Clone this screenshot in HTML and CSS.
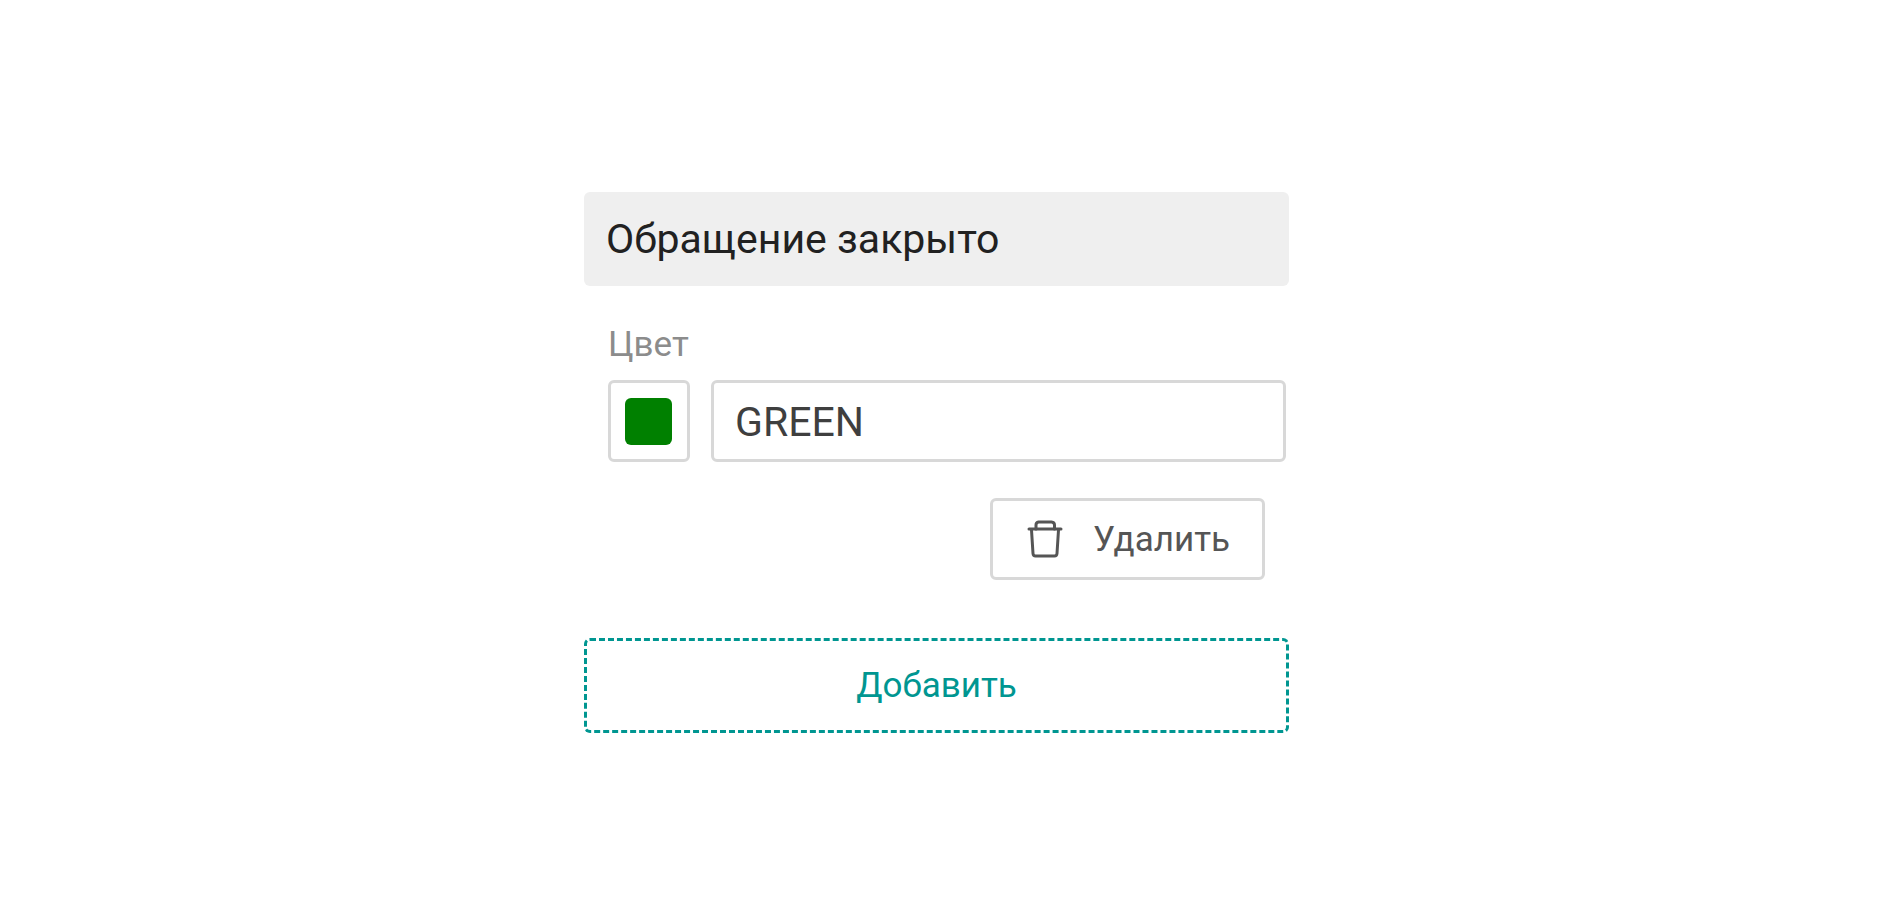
FILE: index.html
```html
<!DOCTYPE html>
<html lang="ru">
<head>
<meta charset="utf-8">
<meta name="viewport" content="width=device-width, initial-scale=1">
<title>Обращение закрыто</title>
<link rel="stylesheet" href="styles.css">
</head>
<body>
<main class="panel">
  <h1 class="panel-title">Обращение закрыто</h1>
  <div class="field">
    <label class="field-label" for="color-name">Цвет</label>
    <div class="field-row">
      <input class="swatch" type="color" value="#008000" aria-label="Выбор цвета">
      <input class="text-input" id="color-name" type="text" value="GREEN">
    </div>
  </div>
  <div class="actions">
    <button class="delete-button" type="button">
      <svg class="trash" viewBox="0 0 36 38" fill="none" stroke="currentColor" stroke-width="3" stroke-linejoin="round" stroke-linecap="round" aria-hidden="true">
        <path d="M2 9H34"/>
        <path d="M9 9V5Q9 2.500 11.500 2H24.500Q27.500 2.200 27.500 5V9"/>
        <path d="M4.500 10L6 33.500Q6.200 36 8.500 36H27.500Q29.800 36 30 33.500L31.500 10"/>
      </svg>
      <span>Удалить</span>
    </button>
  </div>
  <button class="add-button" type="button">Добавить</button>
</main>
</body>
</html>
```
FILE: styles.css
```css
* {
  box-sizing: border-box;
}

body {
  margin: 0;
  padding: 192px 7px 0 0;
  background: #fff;
  font-family: Roboto, sans-serif;
  font-size: 35px;
}

input,
button {
  font: inherit;
  background: #fff;
}

.panel {
  max-width: 705px;
  margin: 0 auto;
}

.panel-title {
  margin: 0;
  padding: 23px 22px;
  border-radius: 6px;
  background: #efefef;
  color: #212121;
  font-size: 41px;
  font-weight: 400;
  line-height: 48px;
}

.field {
  padding: 36px 3px 0 24px;
}

.field-label {
  display: block;
  color: #8c8c8c;
  line-height: 46px;
}

.field-row {
  display: flex;
  gap: 21px;
  margin-top: 12px;
}

.swatch {
  flex: none;
  width: 82px;
  height: 82px;
  padding: 15px 15px 14px 14px;
  border: 3px solid #d8d8d8;
  border-radius: 6px;
  appearance: none;
}

.swatch::-webkit-color-swatch-wrapper {
  padding: 0;
}

.swatch::-webkit-color-swatch {
  border: 0;
  border-radius: 6px;
}

.text-input {
  flex: 1;
  min-width: 0;
  height: 82px;
  padding: 2px 21px 0;
  border: 3px solid #d8d8d8;
  border-radius: 6px;
  color: #3f3f3f;
  font-size: 41px;
}

.actions {
  display: flex;
  justify-content: flex-end;
  padding: 36px 24px 58px;
}

.delete-button {
  display: flex;
  align-items: center;
  gap: 30px;
  height: 82px;
  padding: 0 32px 0 34px;
  border: 3px solid #d8d8d8;
  border-radius: 6px;
  color: #555;
}

.trash {
  width: 36px;
  height: 38px;
}

.add-button {
  width: 100%;
  height: 95px;
  border: 3px dashed #009691;
  border-radius: 6px;
  color: #009691;
}
```
